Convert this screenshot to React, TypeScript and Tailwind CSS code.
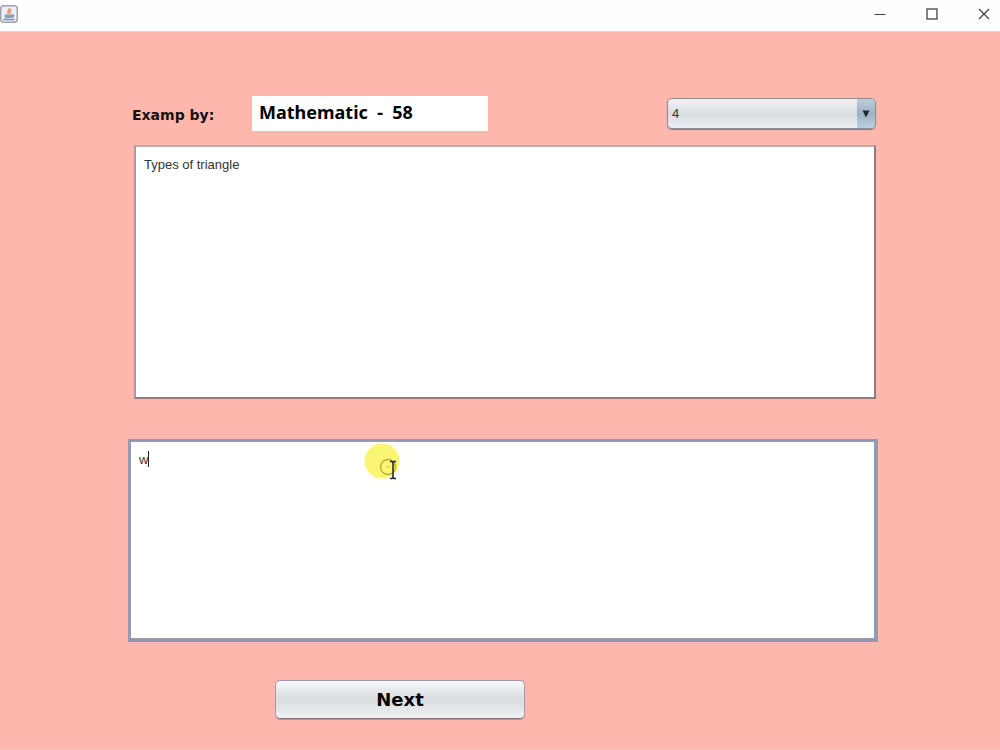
import { useState } from "react";

const questions = [
  { id: "1", text: "Area of a circle" },
  { id: "2", text: "Sum of angles" },
  { id: "3", text: "Prime numbers" },
  { id: "4", text: "Types of triangle" }
];

function JavaIcon() {
  return (
    <svg width="18" height="18" viewBox="0 0 18 18" fill="none" aria-hidden="true">
      <rect x="0.75" y="0.75" width="16.5" height="16.5" rx="3" fill="#eceff4" stroke="#a0a4b0" strokeWidth="1.5" />
      <path d="M9.5 3c.8 1.800-2.400 2.500-1.600 4.200.2.600.9 1 1 1.600M11.500 5c-1.500.8-1.900 1.500-1.300 2.300.3.600.1 1-.4 1.500" stroke="#e38b5c" strokeWidth="1.5" />
      <path d="M4.500 9.500h7.500l-.5 3.500H5z" fill="#8c9fba" />
      <path d="M12 10c2.200-.4 2 1.800-.3 2.200M3.500 14.500h11" stroke="#7c8eaa" strokeWidth="1.5" />
    </svg>
  );
}

function TitleBar() {
  return (
    <header className="flex h-8 items-start justify-between border-b border-[#f3d5d0] bg-[#fefefe]">
      <div className="pt-[5px]">
        <JavaIcon />
      </div>
      <div className="-mr-2.5 flex h-7 items-center overflow-hidden text-[#444]">
        <button className="flex h-7 w-[52px] items-center justify-center" aria-label="Minimize">
          <svg width="12" height="12" viewBox="0 0 12 12" stroke="currentColor">
            <path d="M0.5 6.5h11" />
          </svg>
        </button>
        <button className="flex h-7 w-[52px] items-center justify-center" aria-label="Maximize">
          <svg width="12" height="12" viewBox="0 0 12 12" fill="none" stroke="currentColor">
            <rect x="1" y="1" width="10" height="10" strokeWidth="1.3" />
          </svg>
        </button>
        <button className="flex h-7 w-[52px] items-center justify-center" aria-label="Close">
          <svg width="12" height="12" viewBox="0 0 12 12" stroke="currentColor">
            <path d="M1 1l10 10M11 1L1 11" strokeWidth="1.3" />
          </svg>
        </button>
      </div>
    </header>
  );
}

// click highlight with the text pointer over it
function PointerMark() {
  return (
    <svg
      className="pointer-events-none absolute left-[236px] top-1"
      width="38"
      height="38"
      viewBox="0 0 38 38"
      fill="none"
      aria-hidden="true"
    >
      <circle cx="18" cy="18" r="17.5" fill="#faf573" />
      <circle cx="24" cy="24" r="7.5" stroke="#b5ad3c" strokeWidth="1.3" />
      <path d="M22 24h4" stroke="#ccc551" />
      <path d="M26 18.5h2l1 1 1-1h2M29 19.5v15M26 35.5h2l1-1 1 1h2" stroke="#222" strokeWidth="1.5" />
    </svg>
  );
}

export default function App() {
  const [current, setCurrent] = useState("4");
  const [answer, setAnswer] = useState("w");
  const question = questions.find(item => item.id === current) ?? questions[0];

  const goNext = () => {
    const index = questions.findIndex(item => item.id === current);
    setCurrent(questions[(index + 1) % questions.length].id);
    setAnswer("");
  };

  return (
    <div className="flex min-h-screen flex-col overflow-x-hidden bg-[#ffb6ac] font-['Liberation_Sans',sans-serif] text-[#333]">
      <TitleBar />

      <main className="flex grow flex-col border-b border-[#efc5be] pl-32 pr-[122px] pt-16">
        <div className="flex items-center pl-1">
          <label
            htmlFor="subject"
            className="w-[120px] shrink-0 pt-1 font-['DejaVu_Sans',sans-serif] text-[14px] font-bold text-[#181010]"
          >
            Examp by:
          </label>
          <input
            id="subject"
            readOnly
            value="Mathematic  -  58"
            className="h-[35px] w-[236px] whitespace-pre bg-white px-[7px] pb-1 font-['Noto_Sans',sans-serif] text-[18px] font-bold text-black outline-none"
          />
          <div className="relative ml-auto mr-0.5 w-[209px]">
            <select
              aria-label="Question number"
              value={current}
              onChange={e => setCurrent(e.target.value)}
              className="block h-[31px] w-full appearance-none rounded-[5px] border border-[#8d8e96] bg-linear-to-b from-[#f1f2f5] via-[#d9dde2] to-[#eceff2] px-1 text-[13px] text-[#333] shadow-[0_1px_1px_#8b7c82] outline-none"
            >
              {questions.map(item => (
                <option key={item.id} value={item.id}>
                  {item.id}
                </option>
              ))}
            </select>
            <div className="pointer-events-none absolute inset-y-px right-px flex w-[18px] items-center justify-center rounded-r-[4px] bg-linear-to-b from-[#bdccda] via-[#9fb3c4] to-[#b9cfdf]">
              <svg width="8" height="8" viewBox="0 0 8 8" aria-hidden="true">
                <path d="M0.5 0.5h7L4 7.5z" fill="#1d2733" />
              </svg>
            </div>
          </div>
        </div>

        <textarea
          aria-label="Question"
          readOnly
          value={question.text}
          className="ml-1.5 mr-0.5 mt-3.5 block h-[254px] resize-none border-2 border-b-[#8a7c80] border-l-[#a7999e] border-r-[#8a7c80] border-t-[#c5a9a9] bg-white px-2 py-2 text-[13px] leading-5 outline-none"
        />

        <div className="relative mt-10">
          <textarea
            aria-label="Answer"
            value={answer}
            onChange={e => setAnswer(e.target.value)}
            className="block h-[203px] w-full resize-none border-[3px] border-b-4 border-r-4 border-[#949bb0] bg-[#fffffd] px-2 py-2 text-[13px] leading-5 caret-transparent outline-none"
          />
          <span className="pointer-events-none absolute left-5 top-3 h-4 w-px bg-[#222]" />
          <PointerMark />
        </div>

        <button
          onClick={goNext}
          className="ml-[147px] mt-[38px] h-[39px] w-[250px] rounded-[5px] border border-[#a299a8] border-b-[#76727c] bg-linear-to-b from-[#f5f6f8] via-[#d9dde0] to-[#eef0f2] font-['DejaVu_Sans',sans-serif] text-[18px] font-bold text-black shadow-[0_1px_0_#b39a9e]"
        >
          Next
        </button>
      </main>
    </div>
  );
}
